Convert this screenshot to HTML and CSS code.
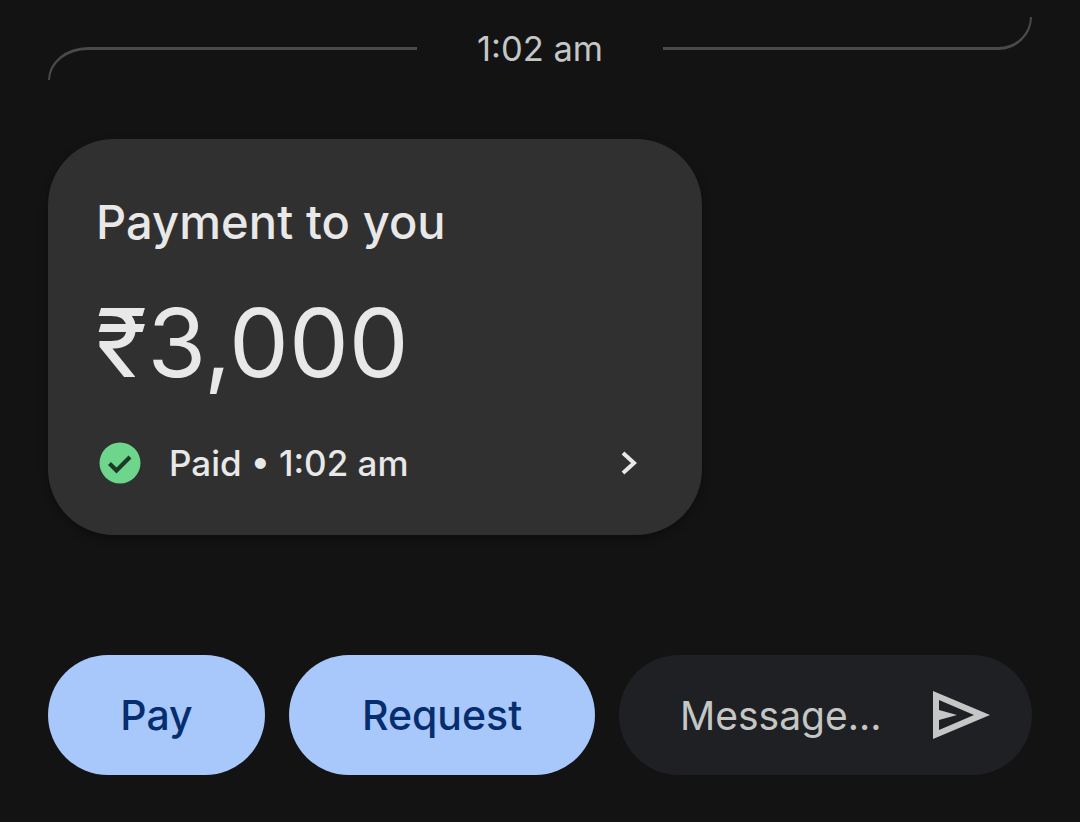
FILE: index.html
```html
<!DOCTYPE html>
<html lang="en">
<head>
<meta charset="utf-8">
<title>Payment</title>
<link rel="stylesheet" href="styles.css">
</head>
<body>
<header class="stamp">
  <div class="rule rule-left"></div>
  <div class="stamp-text">1:02 am</div>
  <div class="rule rule-right"></div>
</header>
<section class="card">
  <div class="card-title">Payment to you</div>
  <div class="card-amount">₹3,000</div>
  <div class="card-status">
    <svg class="check" viewBox="0 0 42 42"><circle cx="21" cy="21" r="20.500" fill="#6dd58c"/><path d="M10.500 21.500l7 7L31 15" fill="none" stroke="#1c3a26" stroke-width="4.200"/></svg>
    <span class="status-text">Paid • 1:02 am</span>
    <svg class="chev" viewBox="0 0 18 26"><path d="M3 3l11 10L3 23" fill="none" stroke="#e8e8e8" stroke-width="4"/></svg>
  </div>
</section>
<footer class="actions">
  <button class="pill pill-pay">Pay</button>
  <button class="pill pill-request">Request</button>
  <div class="message">
    <span class="message-text">Message...</span>
    <svg class="send" viewBox="0 0 57 48"><path fill="#c4c7c5" fill-rule="evenodd" d="M0 0L57 24 0 48ZM6 9V19L24 24 6 29V39L41 24Z"/></svg>
  </div>
</footer>
</body>
</html>
```
FILE: styles.css
```css
html, body { margin: 0; height: 100%; }
body {
  background: #131314;
  padding: 17px 48px 0;
  box-sizing: border-box;
  font-family: Inter, "Liberation Sans", sans-serif;
  overflow: hidden;
}
.stamp { display: flex; height: 63px; }
.rule { flex: 1; height: 33px; box-sizing: border-box; }
.rule-left {
  align-self: flex-end;
  border-top: 3px solid #4a4a4b;
  border-left: 2px solid #4a4a4b;
  border-top-left-radius: 40px 33px;
}
.rule-right {
  align-self: flex-start;
  border-bottom: 3px solid #4a4a4b;
  border-right: 2px solid #4a4a4b;
  border-bottom-right-radius: 34px 33px;
}
.stamp-text {
  width: 246px;
  text-align: center;
  line-height: 63px;
  font-size: 34.500px;
  color: #c4c7c5;
}
.card {
  width: 654px;
  height: 396px;
  margin-top: 59px;
  box-sizing: border-box;
  padding: 56px 48px 0;
  background: #303030;
  border-radius: 66px;
  box-shadow: 0 4px 10px rgba(0, 0, 0, .3);
  color: #e8e8e8;
}
.card-title { font-size: 47px; font-weight: 500; line-height: 54px; letter-spacing: .1px; }
.card-amount { font-size: 95px; line-height: 110px; margin-top: 39px; }
.card-status { display: flex; align-items: center; margin-top: 44px; height: 42px; }
.check { width: 42px; height: 42px; margin-left: 3px; }
.status-text { font-size: 35px; font-weight: 500; margin-left: 28px; flex: 1; }
.chev { width: 18px; height: 26px; margin-right: 16px; }
.actions { display: flex; gap: 24px; margin-top: 120px; height: 120px; }
.pill {
  border: 0;
  border-radius: 60px;
  background: #a8c7fa;
  color: #062e6f;
  font: 500 41px Inter, "Liberation Sans", sans-serif;
  padding: 0;
}
.pill-pay { width: 217px; }
.pill-request { width: 306px; }
.message {
  width: 413px;
  display: flex;
  align-items: center;
  box-sizing: border-box;
  padding: 0 42px 0 61px;
  border-radius: 60px;
  background: #1f2023;
  justify-content: space-between;
}
.message-text { font-size: 39px; color: #c4c7c5; }
.send { width: 57px; height: 48px; }
```
